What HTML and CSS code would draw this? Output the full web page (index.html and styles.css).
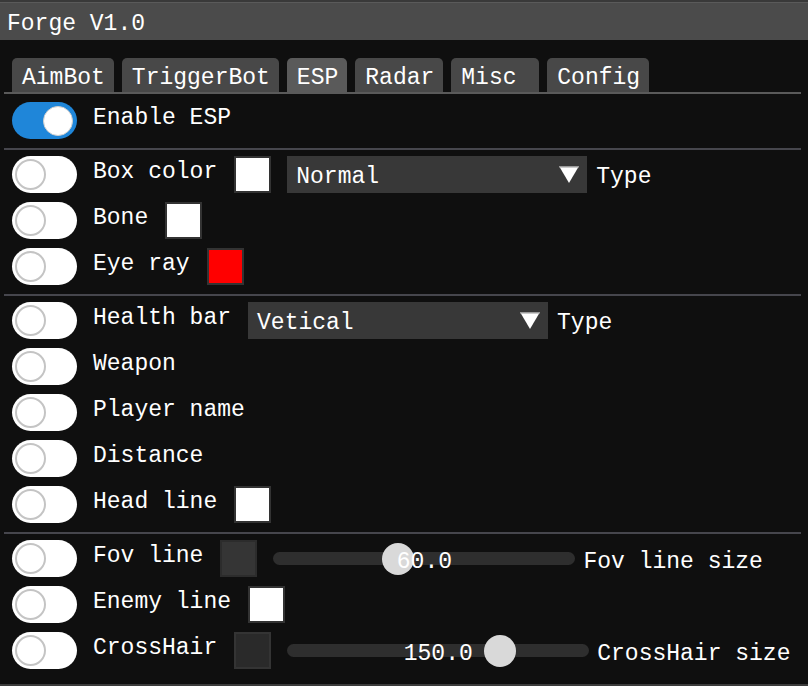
FILE: index.html
```html
<!DOCTYPE html>
<html>
<head>
<meta charset="utf-8">
<link rel="stylesheet" href="styles.css">
</head>
<body>
<div class="window">
  <div class="titlebar"><span class="title">Forge V1.0</span></div>
  <div class="content">
    <div class="tabbar">
      <div class="tab">AimBot</div>
      <div class="tab">TriggerBot</div>
      <div class="tab active">ESP</div>
      <div class="tab">Radar</div>
      <div class="tab">Misc </div>
      <div class="tab">Config</div>
    </div>

    <div class="section first">
      <div class="row">
        <span class="toggle on"><span class="knob"></span></span>
        <span class="label">Enable ESP</span>
      </div>
    </div>

    <div class="section">
      <div class="row">
        <span class="toggle"><span class="knob"></span></span>
        <span class="label">Box color</span>
        <span class="swatch white"></span>
        <div class="combo">
          <span class="combo-text">Normal</span>
          <svg class="arrow" viewBox="0 0 20 17" width="20" height="17"><polygon points="0,0 20,0 10,17" fill="#ffffff"/><rect x="0" y="0" width="20" height="1.5" fill="#9a9a9a"/></svg>
        </div>
        <span class="type">Type</span>
      </div>
      <div class="row">
        <span class="toggle"><span class="knob"></span></span>
        <span class="label">Bone</span>
        <span class="swatch white"></span>
      </div>
      <div class="row">
        <span class="toggle"><span class="knob"></span></span>
        <span class="label">Eye ray</span>
        <span class="swatch red"></span>
      </div>
    </div>

    <div class="section">
      <div class="row">
        <span class="toggle"><span class="knob"></span></span>
        <span class="label">Health bar</span>
        <div class="combo after-label">
          <span class="combo-text">Vetical</span>
          <svg class="arrow" viewBox="0 0 20 17" width="20" height="17"><polygon points="0,0 20,0 10,17" fill="#ffffff"/><rect x="0" y="0" width="20" height="1.5" fill="#9a9a9a"/></svg>
        </div>
        <span class="type">Type</span>
      </div>
      <div class="row">
        <span class="toggle"><span class="knob"></span></span>
        <span class="label">Weapon</span>
      </div>
      <div class="row">
        <span class="toggle"><span class="knob"></span></span>
        <span class="label">Player name</span>
      </div>
      <div class="row">
        <span class="toggle"><span class="knob"></span></span>
        <span class="label">Distance</span>
      </div>
      <div class="row">
        <span class="toggle"><span class="knob"></span></span>
        <span class="label">Head line</span>
        <span class="swatch white"></span>
      </div>
    </div>

    <div class="section last">
      <div class="row">
        <span class="toggle"><span class="knob"></span></span>
        <span class="label">Fov line</span>
        <span class="swatch dark"></span>
        <div class="slider">
          <span class="track"></span>
          <span class="grab" style="left:35.8%"></span>
          <span class="val">60.0</span>
        </div>
        <span class="slider-label">Fov line size</span>
      </div>
      <div class="row">
        <span class="toggle"><span class="knob"></span></span>
        <span class="label">Enemy line</span>
        <span class="swatch white"></span>
      </div>
      <div class="row">
        <span class="toggle"><span class="knob"></span></span>
        <span class="label">CrossHair</span>
        <span class="swatch darker"></span>
        <div class="slider">
          <span class="track"></span>
          <span class="grab" style="left:65.2%"></span>
          <span class="val">150.0</span>
        </div>
        <span class="slider-label">CrossHair size</span>
      </div>
    </div>
  </div>
</div>
</body>
</html>
```

FILE: styles.css
```css
html, body {
  margin: 0;
  padding: 0;
  background: #0f0f0f;
}

body {
  font-family: "Liberation Mono", "DejaVu Sans Mono", monospace;
  font-size: 23px;
  color: #ffffff;
}

.window {
  width: 808px;
  height: 686px;
  box-sizing: border-box;
  border-top: 2px solid #393939;
  border-bottom: 2px solid #3b3b3b;
  background: #0f0f0f;
  overflow: hidden;
}

.titlebar {
  height: 38px;
  box-sizing: border-box;
  background: #4b4b4b;
  border-top: 1px solid #5a5a5a;
  padding: 8px 0 0 7px;
}

.title {
  display: block;
  line-height: 26px;
  white-space: pre;
}

.content {
  margin-left: 4px;
  width: 797px;
}

.tabbar {
  margin-top: 18px;
  display: flex;
  gap: 8px;
  padding-left: 8px;
  border-bottom: 2px solid #5a5a5a;
}

.tab {
  height: 34px;
  box-sizing: border-box;
  background: #484848;
  border-radius: 5px 5px 0 0;
  padding: 7px 9px 0 10px;
  line-height: 26px;
  white-space: pre;
}

.tab.active {
  background: #5a5a5a;
}

.section {
  display: flex;
  flex-direction: column;
  gap: 9px;
  padding: 6px 0 9px;
  border-bottom: 2px solid #46464d;
}

.section.first {
  padding-top: 8px;
}

.section.last {
  border-bottom: none;
}

.row {
  display: flex;
  align-items: flex-start;
  height: 37px;
  padding-left: 8px;
}

.toggle {
  flex: none;
  width: 65px;
  height: 37px;
  box-sizing: border-box;
  border-radius: 19px;
  background: #ffffff;
  display: flex;
  align-items: center;
  padding: 0 4px 0 3px;
  margin-right: 16px;
}

.knob {
  width: 31px;
  height: 31px;
  box-sizing: border-box;
  border-radius: 50%;
  border: 2px solid #c4c4c4;
  background: #ffffff;
}

.toggle.on {
  background: #1f86d9;
  justify-content: flex-end;
}

.toggle.on .knob {
  width: 30px;
  height: 30px;
  border: 1px solid #cfcfcf;
}

.label {
  line-height: 26px;
  margin-top: 3px;
  white-space: pre;
}

.swatch {
  flex: none;
  width: 37px;
  height: 37px;
  box-sizing: border-box;
  border: 2px solid #333333;
  margin-left: 17px;
}

.white { background: #ffffff; }
.red { background: #ff0000; }
.dark { background: #353535; border-color: #2c2c2c; }
.darker { background: #2a2a2a; border-color: #343434; }

.combo {
  flex: none;
  width: 300px;
  height: 37px;
  box-sizing: border-box;
  background: #383838;
  margin-left: 16px;
  display: flex;
  align-items: flex-start;
  justify-content: space-between;
  padding: 0 8px 0 9px;
}

.combo.after-label {
  margin-left: 17px;
}

.combo-text {
  line-height: 26px;
  margin-top: 8px;
  white-space: pre;
}

.arrow {
  display: block;
  margin-top: 10px;
}

.type {
  margin-left: 9px;
  line-height: 26px;
  margin-top: 8px;
}

.slider {
  position: relative;
  flex: none;
  width: 302px;
  height: 37px;
  margin-left: 16px;
  display: flex;
  justify-content: center;
}

.track {
  position: absolute;
  left: 0;
  right: 0;
  top: 12px;
  height: 13px;
  border-radius: 7px;
  background: #2e2e2e;
}

.grab {
  position: absolute;
  top: 2.5px;
  width: 32px;
  height: 32px;
  border-radius: 50%;
  background: #d9d9d9;
}

.val {
  position: relative;
  line-height: 26px;
  margin-top: 9px;
}

.slider-label {
  margin-left: 8px;
  line-height: 26px;
  margin-top: 9px;
  white-space: pre;
}
```
